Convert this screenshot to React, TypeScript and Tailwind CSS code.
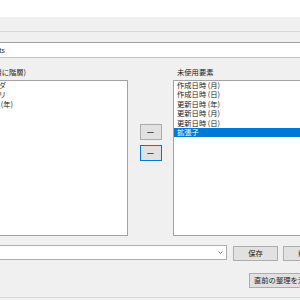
import React from "react";

const rightItems = ["作成日時 (月)", "作成日時 (日)", "更新日時 (年)", "更新日時 (月)", "更新日時 (日)", "拡張子"];
const leftItems: { t: string; w: string }[] = [
  { t: "フォルダ", w: "w-[6px]" },
  { t: "カテゴリ", w: "w-[6px]" },
  { t: "作成日時 (年)", w: "w-[13px]" },
];

export default function App() {
  return (
    <div className="w-[300px] h-[300px] overflow-hidden bg-[#f0f0f0] flex flex-col text-[7.3px] text-[#1a1a1a] font-['Noto_Sans_CJK_JP','Noto_Sans',sans-serif]">
      <div className="h-[17px] bg-white shrink-0" />
      <div className="h-[15px] border-b border-[#d8d8d8] shrink-0" />
      <div className="h-[10px] shrink-0" />
      <div className="h-[16px] shrink-0 bg-white border-t border-t-[#a0a0a0] border-b border-b-[#c4c4c4] flex items-center">
        <div className="w-[5px] shrink-0 flex justify-end whitespace-nowrap leading-[9px]">C:\Users\user\Documents</div>
      </div>
      <div className="flex shrink-0">
        <div className="w-[128px] shrink-0 flex flex-col">
          <div className="h-[22px] pt-[10px] leading-[9px]">
            <div className="w-[26px] flex justify-end whitespace-nowrap">整理順序 (上から順に階層)</div>
          </div>
          <div className="h-[156px] bg-white border border-l-0 border-[#a3a3a3]">
            {leftItems.map((it) => (
              <div key={it.t} className="h-[9.4px] leading-[9.4px] flex">
                <div className={`${it.w} shrink-0 flex justify-end whitespace-nowrap`}>{it.t}</div>
              </div>
            ))}
          </div>
        </div>
        <div className="w-[45px] shrink-0 flex flex-col items-center pt-[66px] gap-[5px]">
          <button className="w-[22px] h-[16px] bg-[#e1e1e1] border border-[#adadad] flex items-center justify-center leading-none text-[8px] font-bold text-[#333]">—</button>
          <button className="w-[22px] h-[16px] bg-[#e1e1e1] border border-[#0078d7] flex items-center justify-center leading-none text-[8px] font-bold text-[#333]">—</button>
        </div>
        <div className="w-[140px] shrink-0 flex flex-col">
          <div className="h-[22px] pt-[10px] leading-[9px] pl-[4px] whitespace-nowrap">未使用要素</div>
          <div className="h-[156px] w-[140px] bg-white border border-r-0 border-[#a3a3a3]">
            {rightItems.map((t, i) => (
              <div
                key={t}
                className={
                  i === 5
                    ? "h-[9.4px] leading-[9.4px] pl-[3px] whitespace-nowrap bg-[#0078d7] text-white"
                    : "h-[9.4px] leading-[9.4px] pl-[3px] whitespace-nowrap"
                }
              >
                {t}
              </div>
            ))}
          </div>
        </div>
      </div>
      <div className="h-[9px] shrink-0" />
      <div className="flex items-start shrink-0">
        <div className="w-[227px] h-[15px] shrink-0 bg-white border border-l-0 border-[#adadad] flex items-center justify-end pr-[3px]">
          <svg width="5" height="3" viewBox="0 0 5 3" className="block">
            <polyline points="0.5,0.5 2.5,2.5 4.5,0.5" fill="none" stroke="#555" strokeWidth="0.9" />
          </svg>
        </div>
        <button className="ml-[6px] mt-[1px] w-[45px] h-[15px] shrink-0 bg-[#e1e1e1] border border-[#adadad] flex items-center justify-center leading-none">保存</button>
        <button className="ml-[5px] mt-[1px] w-[45px] h-[15px] shrink-0 bg-[#e1e1e1] border border-[#adadad] flex items-center justify-center leading-none whitespace-nowrap">削除</button>
      </div>
      <div className="h-[12px] shrink-0" />
      <div className="flex shrink-0">
        <div className="w-[249px] shrink-0" />
        <button className="w-[100px] h-[15px] shrink-0 bg-[#e1e1e1] border border-[#adadad] flex items-center pl-[4px] leading-none whitespace-nowrap">直前の整理を元に戻す</button>
      </div>
      <div className="h-[10px] shrink-0 border-b border-[#dadada]" />
    </div>
  );
}
